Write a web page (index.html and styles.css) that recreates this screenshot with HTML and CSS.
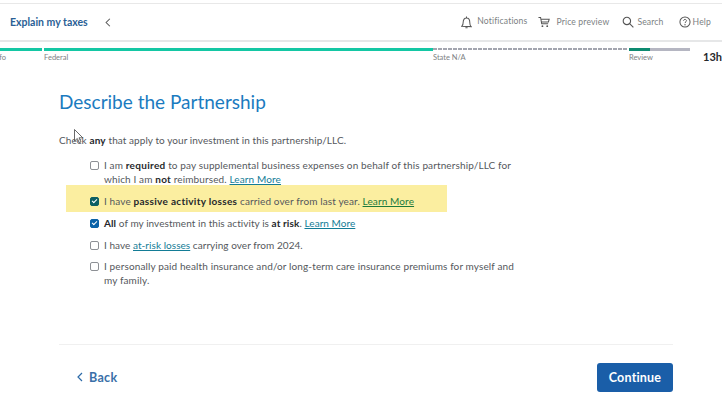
FILE: index.html
```html
<!DOCTYPE html>
<html lang="en">
<head>
<meta charset="UTF-8">
<title>Describe the Partnership</title>
<link rel="stylesheet" href="styles.css">
</head>
<body>

<header class="topbar">
  <div class="topbar-left">
    <a class="explain">Explain my taxes</a>
    <svg class="collapse" width="6" height="9" viewBox="0 0 8 12"><path d="M6.5 1 1.5 6l5 5" fill="none" stroke="#555" stroke-width="1.4"/></svg>
  </div>
  <nav class="tools">
    <span class="tool tool-notif">
      <svg width="11" height="15" viewBox="0 0 12 15"><path d="M1 11.500c1-1 1.400-2 1.400-4.500C2.400 4.500 3.800 2.500 6 2.500s3.600 2 3.600 5c0 2.500.4 3.500 1.400 4.500ZM6 1v1.500M4.800 13.300h2.400" fill="none" stroke="#555" stroke-width="1.100"/></svg>
      <span class="tool-raised">Notifications</span>
    </span>
    <span class="tool tool-cart">
      <svg width="12" height="12" viewBox="0 0 13 13"><path d="M.500 1.500h2.300l1.200 7h7M3.100 3.500h9l-.8 3H3.600" fill="none" stroke="#555" stroke-width="1.100"/><circle cx="4.800" cy="11" r="1" fill="#555"/><circle cx="10" cy="11" r="1" fill="#555"/></svg>
      Price preview
    </span>
    <span class="tool tool-search">
      <svg width="12" height="12" viewBox="0 0 13 13"><circle cx="5.300" cy="5.300" r="4" fill="none" stroke="#555" stroke-width="1.200"/><path d="m8.300 8.300 4 4" stroke="#555" stroke-width="1.200"/></svg>
      Search
    </span>
    <span class="tool tool-help">
      <svg width="12" height="12" viewBox="0 0 13 13"><circle cx="6.500" cy="6.500" r="5.500" fill="none" stroke="#555" stroke-width="1.100"/><path d="M4.900 5.200c0-2 3.200-2 3.200-.1 0 1.200-1.600 1.200-1.600 2.600" fill="none" stroke="#555"/><circle cx="6.500" cy="9.500" r=".7" fill="#555"/></svg>
      Help
    </span>
  </nav>
</header>

<div class="progress">
  <div class="step step-info"><div class="bar done"></div><span class="step-label">Info</span></div>
  <div class="step step-federal"><div class="bar done"></div><span class="step-label">Federal</span></div>
  <div class="step step-state"><div class="bar dashed"></div><span class="step-label">State N/A</span></div>
  <div class="step step-review"><div class="bar review"><div class="review-fill"></div></div><span class="step-label">Review</span></div>
  <div class="time">13h</div>
</div>

<main class="main">
  <h1>Describe the Partnership</h1>
  <p class="intro">Check <b>any</b> that apply to your investment in this partnership/LLC.</p>

  <div class="options">
    <label class="opt">
      <input type="checkbox">
      <span>I am <b>required</b> to pay supplemental business expenses on behalf of this partnership/LLC for which I am <b>not</b> reimbursed. <a>Learn More</a></span>
    </label>
    <label class="opt opt-marked">
      <input type="checkbox" checked>
      <span>I have <b>passive activity losses</b> carried over from last year. <a>Learn More</a></span>
    </label>
    <label class="opt opt-tight">
      <input type="checkbox" checked>
      <span><b>All</b> of my investment in this activity is <b>at risk</b>. <a>Learn More</a></span>
    </label>
    <label class="opt opt-tight">
      <input type="checkbox">
      <span>I have <a>at-risk losses</a> carrying over from 2024.</span>
    </label>
    <label class="opt">
      <input type="checkbox">
      <span>I personally paid health insurance and/or long-term care insurance premiums for myself and my family.</span>
    </label>
  </div>

  <footer class="actions">
    <a class="back">
      <svg width="6" height="10" viewBox="0 0 6 10"><path d="M5 1 1 5l4 4" fill="none" stroke="#2c6aa8" stroke-width="1.200"/></svg>
      Back
    </a>
    <button class="continue">Continue</button>
  </footer>
</main>

<svg class="cursor" width="10" height="15" viewBox="0 0 10 15"><path d="M.500.500v11.500l2.800-2.500 2 4.200 1.700-.8-2-4.100h3.800Z" fill="#fff" stroke="#444" stroke-width=".8"/></svg>

</body>
</html>
```

FILE: styles.css
```css
html,body{margin:0;background:#fff;font-family:Lato,"Open Sans",sans-serif;color:#54575c}
body{width:722px;height:405px;overflow:hidden;position:relative}
b{color:#26282b;font-weight:700}

.topbar{display:flex;justify-content:space-between;align-items:center;height:36px;margin-top:3px;border-top:1px solid #e8e8e8;border-bottom:2px solid #e6e7e8}
.topbar-left{display:flex;align-items:center;padding-left:10px}
.explain{font-size:10.500px;font-weight:700;color:#2b5f95}
.collapse{margin-left:17px}
.tools{display:flex;align-items:center;font-size:8.600px;letter-spacing:.15px;color:#7c7f83;padding-right:11px}
.tool{display:flex;align-items:center;gap:5px}
.tool-raised{position:relative;top:-1px}
.tool-cart{margin-left:11px;gap:6px}
.tool-search{margin-left:13px;gap:3px}
.tool-help{margin-left:15px;gap:2px}

.progress{display:flex;height:30px;padding-top:6px;box-sizing:border-box;overflow:hidden}
.step{flex:none;display:flex;flex-direction:column}
.step-info{width:44px}
.step-federal{width:389px}
.step-state{width:196px}
.step-review{width:61px}
.step-label{font-size:7.500px;color:#7c7f83;margin-top:2px}
.step-info .step-label{margin-left:-7px}
.bar{height:3px;margin-right:2px}
.step-federal .bar{margin-right:0}
.step-state .bar{margin-right:2px}
.step-review .bar{margin-right:0}
.done{background:#14c7a4}
.dashed{height:2px;margin-bottom:1px;background:repeating-linear-gradient(90deg,#a3a5af 0 4px,#fff 4px 5px)}
.review{background:#b5b6c2;display:flex}
.review-fill{width:21px;background:#0d8a70}
.time{margin-left:13px;margin-top:2px;font-size:11px;font-weight:700;color:#26282b;white-space:nowrap}

.main{padding:18px 49px 0 59px}
h1{margin:0;font-size:19px;font-weight:400;line-height:24px;color:#1b7bbf}
.intro{margin:19px 0 0;font-size:10px;line-height:14px;letter-spacing:.07px}
.intro b{letter-spacing:.2px}

.options{display:flex;flex-direction:column;margin:11px 0 0 7px;font-size:10px;line-height:14px;letter-spacing:.12px}
.options b{letter-spacing:.3px}
.opt{display:flex;align-items:flex-start;gap:5px;width:426px;padding-left:24px;margin-bottom:7.500px}
.opt-tight{letter-spacing:.05px}
.opt-tight b{letter-spacing:.1px}
.opt-marked{width:357px;background:#fbeea0;margin-top:-8.500px;margin-bottom:4px;padding-top:9px;padding-bottom:4px}
.opt input{appearance:none;flex:none;box-sizing:border-box;width:9px;height:9px;margin:3px 0 0;border:1px solid #8d9095;border-radius:2px;background:#fff;position:relative}
.opt input:checked{background:#0a62a8;border-color:#0a62a8}
.opt-marked input:checked{background:#0d5f63;border-color:#0d5f63}
.opt input:checked::after{content:"";position:absolute;left:2px;top:0;width:2px;height:4px;border:solid #fff;border-width:0 1px 1px 0;transform:rotate(45deg)}
.opt a{color:#137c96;text-decoration:underline}
.opt-marked a{color:#1d7a3c}

.actions{display:flex;justify-content:space-between;align-items:center;margin-top:49px;padding-top:18px;border-top:1px solid #f0f0f0}
.back{display:flex;align-items:center;gap:6px;margin-left:18px;font-size:12.500px;font-weight:700;letter-spacing:.3px;color:#3a6fa8}
.continue{width:76px;height:29px;padding:0;border:0;border-radius:3px;background:#1a5ea8;color:#fff;font-family:inherit;font-size:12.500px;font-weight:700;letter-spacing:.2px}

.cursor{position:absolute;left:74px;top:129px}
```
